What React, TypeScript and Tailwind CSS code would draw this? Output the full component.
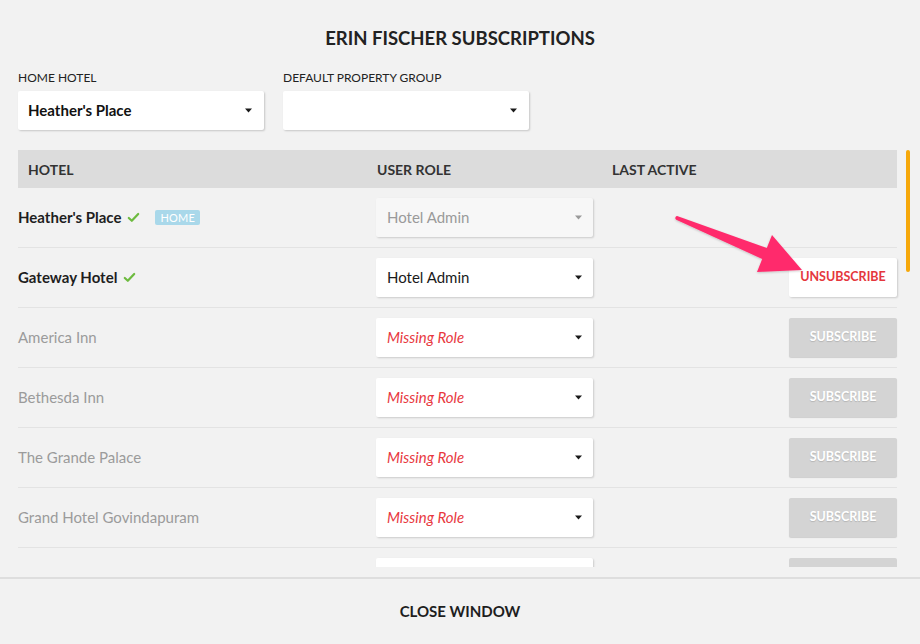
import React from "react";

type Row = {
  name: string;
  active: boolean;
  home?: boolean;
  role: string;
  roleState: "disabled" | "set" | "missing";
  action: "none" | "unsubscribe" | "subscribe" | "blank";
};

const rows: Row[] = [
  { name: "Heather's Place", active: true, home: true, role: "Hotel Admin", roleState: "disabled", action: "none" },
  { name: "Gateway Hotel", active: true, role: "Hotel Admin", roleState: "set", action: "unsubscribe" },
  { name: "America Inn", active: false, role: "Missing Role", roleState: "missing", action: "subscribe" },
  { name: "Bethesda Inn", active: false, role: "Missing Role", roleState: "missing", action: "subscribe" },
  { name: "The Grande Palace", active: false, role: "Missing Role", roleState: "missing", action: "subscribe" },
  { name: "Grand Hotel Govindapuram", active: false, role: "Missing Role", roleState: "missing", action: "subscribe" },
  { name: "", active: false, role: "", roleState: "set", action: "blank" },
];

function Caret({ light }: { light?: boolean }) {
  return (
    <svg width="7" height="5" viewBox="0 0 7 5" className="shrink-0">
      <path d="M0 0.5 L7 0.5 L3.5 4.5 Z" fill={light ? "#9a9a9a" : "#1a1a1a"} />
    </svg>
  );
}

function Check() {
  return (
    <svg width="13" height="11" viewBox="0 0 13 11" className="shrink-0">
      <path d="M1.8 6 L4.8 8.8 L11.2 2" fill="none" stroke="#6dbb3f" strokeWidth="2.2" strokeLinecap="round" strokeLinejoin="round" />
    </svg>
  );
}

export default function App() {
  return (
    <div
      className="relative w-[920px] h-[644px] overflow-hidden bg-[#f2f2f2] flex flex-col text-[#222]"
      style={{ fontFamily: "Lato, 'Open Sans', sans-serif" }}
    >
      {/* Title */}
      <div className="pt-[26px] h-[50px] text-center text-[18.5px] leading-[24px] font-bold text-[#222]">
        ERIN FISCHER SUBSCRIPTIONS
      </div>

      {/* Top selects */}
      <div className="mt-[20px] px-[18px] flex gap-[19px]">
        <div className="flex flex-col">
          <div className="text-[12px] leading-[16px] text-[#222] mb-[5px]">HOME HOTEL</div>
          <div className="w-[246px] h-[39px] bg-white rounded-[2px] shadow-[1px_1px_2px_rgba(0,0,0,0.18)] flex items-center justify-between pl-[10px] pr-[12px]">
            <span className="text-[15px] font-bold text-[#111]">Heather's Place</span>
            <Caret />
          </div>
        </div>
        <div className="flex flex-col">
          <div className="text-[12px] leading-[16px] text-[#222] mb-[5px]">DEFAULT PROPERTY GROUP</div>
          <div className="w-[246px] h-[39px] bg-white rounded-[2px] shadow-[1px_1px_2px_rgba(0,0,0,0.18)] flex items-center justify-end pr-[12px]">
            <Caret />
          </div>
        </div>
      </div>

      {/* Table area */}
      <div className="mt-[20px] h-[417px] overflow-hidden px-[18px] w-[915px]">
        <div className="grid grid-cols-[358px_236px_1fr_108px] h-[38px] bg-[#dcdcdc] items-center text-[14px] font-bold text-[#333]">
          <div className="pl-[10px]">HOTEL</div>
          <div className="pl-[1px]">USER ROLE</div>
          <div>LAST ACTIVE</div>
          <div />
        </div>
        {rows.map((r, i) => (
          <div
            key={i}
            className="grid grid-cols-[358px_236px_1fr_108px] h-[60px] border-b border-[#e3e3e3] items-center"
          >
            <div className="flex items-center gap-[6px] text-[15px]">
              {r.name && (
                <span className={r.active ? "font-bold text-[#1e1e1e]" : "text-[#9b9b9b]"}>{r.name}</span>
              )}
              {r.active && <Check />}
              {r.home && (
                <span className="ml-[9px] h-[15px] px-[5px] rounded-[2px] bg-[#a9d8ea] text-white text-[11px] leading-[15px] tracking-[0.2px]">
                  HOME
                </span>
              )}
            </div>
            <div>
              <div
                className={
                  "w-[217px] h-[39px] rounded-[2px] shadow-[1px_1px_2px_rgba(0,0,0,0.16)] flex items-center justify-between pl-[11px] pr-[11px] text-[15px] " +
                  (r.roleState === "disabled" ? "bg-[#f7f7f7] text-[#9a9a9a]" : "bg-white")
                }
              >
                <span
                  className={
                    r.roleState === "missing"
                      ? "italic text-[#e8393f]"
                      : r.roleState === "set"
                      ? "text-[#1a1a1a]"
                      : ""
                  }
                >
                  {r.role}
                </span>
                {r.role && <Caret light={r.roleState === "disabled"} />}
              </div>
            </div>
            <div />
            <div>
              {r.action === "unsubscribe" && (
                <div className="w-[108px] h-[39px] rounded-[2px] bg-white shadow-[1px_1px_2px_rgba(0,0,0,0.16)] flex items-center justify-center text-[12.5px] font-bold text-[#e5373d]">
                  UNSUBSCRIBE
                </div>
              )}
              {r.action === "subscribe" && (
                <div className="w-[108px] h-[39px] rounded-[2px] bg-[#d4d4d4] shadow-[0_1px_1px_rgba(0,0,0,0.15)] flex items-center justify-center text-[12.5px] font-bold text-white [text-shadow:0_1px_1px_rgba(0,0,0,0.15)]">
                  SUBSCRIBE
                </div>
              )}
              {r.action === "blank" && (
                <div className="w-[108px] h-[39px] rounded-[2px] bg-[#d4d4d4]" />
              )}
            </div>
          </div>
        ))}
      </div>

      {/* Footer */}
      <div className="mt-[10px] border-t-2 border-[#dedede] flex-1 flex items-center justify-center">
        <span className="text-[15px] font-bold text-[#1e1e1e]">CLOSE WINDOW</span>
      </div>

      {/* Scrollbar */}
      <div className="absolute left-[906px] top-[150px] w-[4px] h-[122px] rounded-full bg-[#f6a80a]" />

      {/* Annotation arrow */}
      <svg className="absolute left-0 top-0 pointer-events-none" width="920" height="644">
        <defs>
          <filter id="ds" x="-20%" y="-20%" width="140%" height="140%">
            <feDropShadow dx="0" dy="1" stdDeviation="1" floodColor="#000" floodOpacity="0.2" />
          </filter>
        </defs>
        <path
          d="M677.8 216.2 L766.8 248 L772 235 L802 270 L757 272 L762.2 259 L676.2 219.8 A2 2 0 0 1 677.8 216.2 Z"
          fill="#ff2c6c"
          filter="url(#ds)"
        />
      </svg>
    </div>
  );
}
